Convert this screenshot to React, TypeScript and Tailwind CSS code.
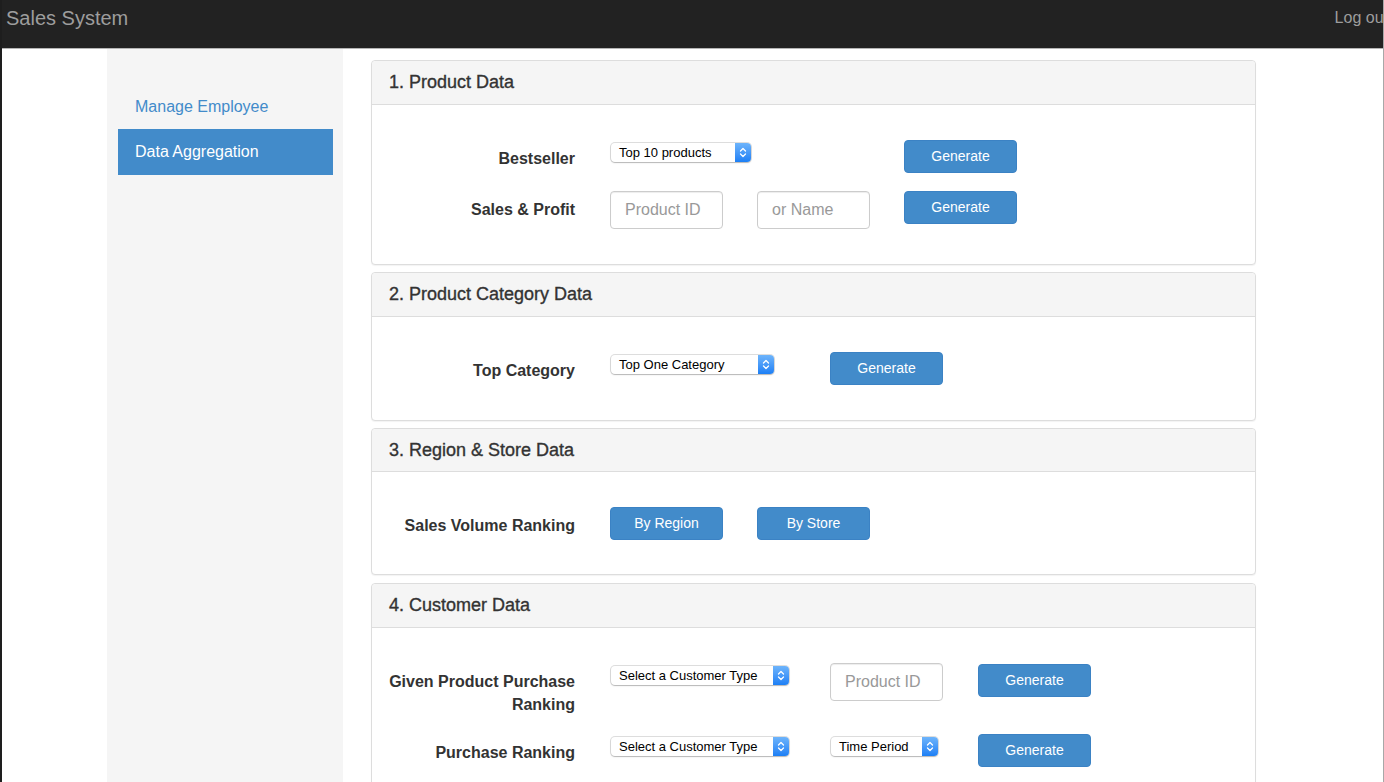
import React from "react";

const font = { fontFamily: '"Liberation Sans", Arial, Helvetica, sans-serif' };

function MacSelect({ label, width }: { label: string; width: number }) {
  return (
    <div
      className="flex h-[19px] items-stretch rounded-[4px] bg-white shadow-[0_0_0_1px_rgba(0,0,0,0.13),0_1px_1.5px_rgba(0,0,0,0.18)]"
      style={{ width }}
    >
      <span className="flex flex-1 items-center pl-[8px] text-[13px] leading-none text-black whitespace-nowrap">
        {label}
      </span>
      <div className="flex w-[16px] items-center justify-center rounded-r-[4px] bg-gradient-to-b from-[#6db4fb] to-[#1b7ff5]">
        <svg width="8" height="13" viewBox="0 0 8 13" fill="none">
          <path d="M1.5 5 L4 2.5 L6.5 5" stroke="white" strokeWidth="1.3" strokeLinecap="round" strokeLinejoin="round" />
          <path d="M1.5 8 L4 10.5 L6.5 8" stroke="white" strokeWidth="1.3" strokeLinecap="round" strokeLinejoin="round" />
        </svg>
      </div>
    </div>
  );
}

function TextInput({ placeholder, width }: { placeholder: string; width: number }) {
  return (
    <div
      className="flex h-[38px] items-center rounded-[4px] border border-[#cccccc] bg-white pl-[14px] text-[16px] text-[#999999] shadow-[inset_0_1px_1px_rgba(0,0,0,0.075)]"
      style={{ width }}
    >
      {placeholder}
    </div>
  );
}

function Btn({ children, width = 113 }: { children: React.ReactNode; width?: number }) {
  return (
    <button
      className="flex h-[33px] items-center justify-center rounded-[4px] border border-[#3b82c4] bg-[#428bca] text-[14px] text-white"
      style={{ width }}
    >
      {children}
    </button>
  );
}

function Label({ children }: { children: React.ReactNode }) {
  return (
    <div className="w-[203px] shrink-0 pl-[15px] pt-[7px] text-right text-[16px] font-bold leading-[23px] text-[#333333]">
      {children}
    </div>
  );
}

function Panel({
  title,
  children,
  compact = false,
}: {
  title: string;
  children: React.ReactNode;
  compact?: boolean;
}) {
  return (
    <div
      className={
        compact
          ? "mb-[8px] rounded-[4px] border border-[#dddddd] bg-white shadow-[0_1px_1px_rgba(0,0,0,0.05)]"
          : "mb-[7px] rounded-[4px] border border-[#dddddd] bg-white shadow-[0_1px_1px_rgba(0,0,0,0.05)]"
      }
    >
      <div
        className={
          compact
            ? "flex h-[43px] items-center rounded-t-[4px] border-b border-[#dddddd] bg-[#f5f5f5] pl-[17px] text-[18px] text-[#333333] [-webkit-text-stroke:0.35px_#333333]"
            : "flex h-[44px] items-center rounded-t-[4px] border-b border-[#dddddd] bg-[#f5f5f5] pl-[17px] text-[18px] text-[#333333] [-webkit-text-stroke:0.35px_#333333]"
        }
      >
        {title}
      </div>
      <div className={compact ? "pt-[35px] pb-[34px]" : "pt-[35px] pb-[35px]"}>{children}</div>
    </div>
  );
}

export default function App() {
  return (
    <div
      className="min-h-screen border-l-2 border-r border-l-[#1e1e1e] border-r-[#a8a8a8] bg-white"
      style={font}
    >
      <div className="flex h-[49px] items-start justify-between border-b border-[#b5b5b5] bg-[#222222]">
        <div className="pl-[4px] pt-[6px] text-[20px] leading-[24px] text-[#9d9d9d]">Sales System</div>
        <div className="-mr-[5px] pt-[8px] text-[16px] leading-[20px] text-[#9d9d9d]">Log out</div>
      </div>
      <div className="flex min-h-[733px]">
        <div className="ml-[105px] w-[236px] shrink-0 bg-[#f5f5f5] pt-[35px]">
          <div className="ml-[11px] flex h-[45px] w-[215px] items-center pl-[17px] text-[16px] text-[#428bca]">
            Manage Employee
          </div>
          <div className="ml-[11px] flex h-[46px] w-[215px] items-center bg-[#428bca] pl-[17px] text-[16px] text-white">
            Data Aggregation
          </div>
        </div>
        <div className="ml-[28px] w-[885px] shrink-0 pt-[11px]">
          <Panel title="1. Product Data">
            <div className="flex items-start">
              <Label>Bestseller</Label>
              <div className="ml-[35px] w-[294px] pt-[3px] pl-[1px]">
                <MacSelect label="Top 10 products" width={140} />
              </div>
              <Btn>Generate</Btn>
            </div>
            <div className="mt-[18px] flex items-start">
              <Label>Sales &amp; Profit</Label>
              <div className="ml-[35px] w-[147px]">
                <TextInput placeholder="Product ID" width={113} />
              </div>
              <div className="w-[147px]">
                <TextInput placeholder="or Name" width={113} />
              </div>
              <Btn>Generate</Btn>
            </div>
          </Panel>

          <Panel title="2. Product Category Data">
            <div className="flex items-start">
              <Label>Top Category</Label>
              <div className="ml-[35px] w-[220px] pt-[3px] pl-[1px]">
                <MacSelect label="Top One Category" width={163} />
              </div>
              <Btn>Generate</Btn>
            </div>
          </Panel>

          <Panel title="3. Region & Store Data" compact>
            <div className="flex items-start">
              <Label>Sales Volume Ranking</Label>
              <div className="ml-[35px] w-[147px]">
                <Btn width={113}>By Region</Btn>
              </div>
              <Btn width={113}>By Store</Btn>
            </div>
          </Panel>

          <Panel title="4. Customer Data">
            <div className="flex items-start">
              <Label>Given Product Purchase Ranking</Label>
              <div className="ml-[35px] w-[220px] pt-[3px] pl-[1px]">
                <MacSelect label="Select a Customer Type" width={178} />
              </div>
              <div className="w-[148px]">
                <TextInput placeholder="Product ID" width={113} />
              </div>
              <div className="pt-[1px]">
                <Btn>Generate</Btn>
              </div>
            </div>
            <div className="mt-[18px] flex items-start">
              <Label>Purchase Ranking</Label>
              <div className="ml-[35px] w-[221px] pt-[3px] pl-[1px]">
                <MacSelect label="Select a Customer Type" width={178} />
              </div>
              <div className="w-[147px] pt-[3px]">
                <MacSelect label="Time Period" width={107} />
              </div>
              <Btn>Generate</Btn>
            </div>
          </Panel>
        </div>
      </div>
    </div>
  );
}
